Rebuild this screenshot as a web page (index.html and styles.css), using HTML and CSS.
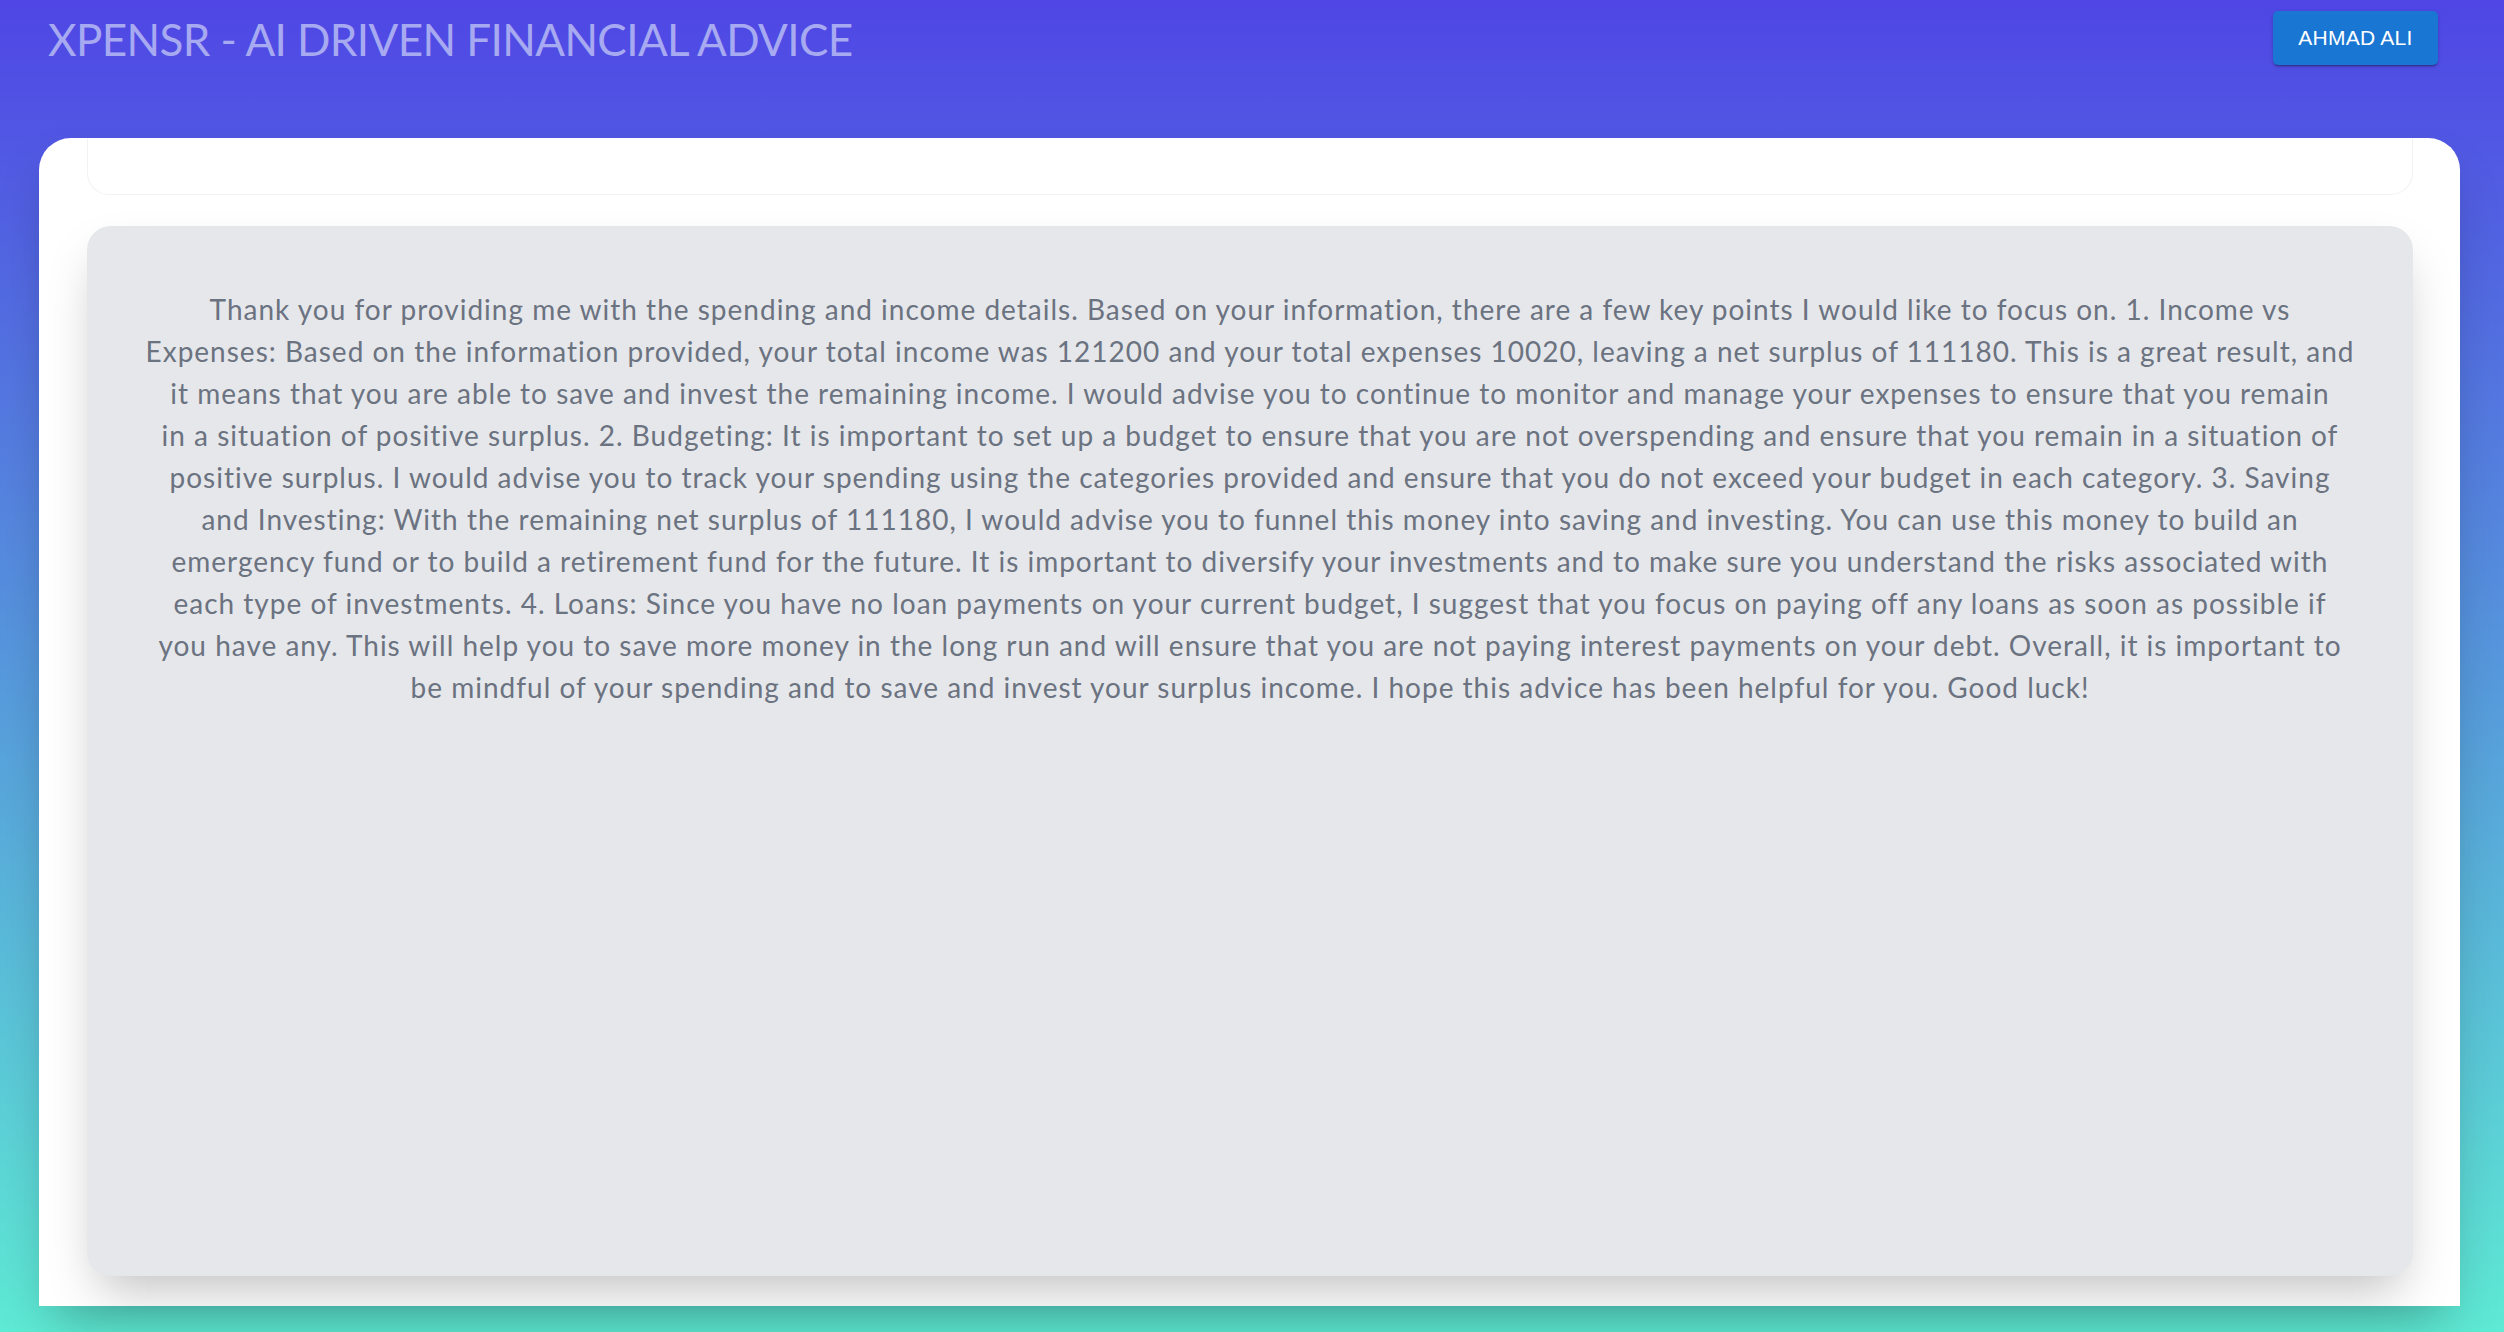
FILE: index.html
```html
<!DOCTYPE html>
<html lang="en">
<head>
<meta charset="utf-8">
<title>XPENSR - AI Driven Financial Advice</title>
<link rel="stylesheet" href="styles.css">
</head>
<body>
<div class="page">
  <header class="topbar">
    <h1 class="title">XPENSR - AI DRIVEN FINANCIAL ADVICE</h1>
    <button class="user-btn" type="button">Ahmad Ali</button>
  </header>
  <main class="card">
    <div class="panel"></div>
    <section class="advice">
      <p class="advice-text">Thank you for providing me with the spending and income details. Based on your information, there are a few key points I would like to focus on. 1. Income vs<br>
Expenses: Based on the information provided, your total income was 121200 and your total expenses 10020, leaving a net surplus of 111180. This is a great result, and<br>
it means that you are able to save and invest the remaining income. I would advise you to continue to monitor and manage your expenses to ensure that you remain<br>
in a situation of positive surplus. 2. Budgeting: It is important to set up a budget to ensure that you are not overspending and ensure that you remain in a situation of<br>
positive surplus. I would advise you to track your spending using the categories provided and ensure that you do not exceed your budget in each category. 3. Saving<br>
and Investing: With the remaining net surplus of 111180, I would advise you to funnel this money into saving and investing. You can use this money to build an<br>
emergency fund or to build a retirement fund for the future. It is important to diversify your investments and to make sure you understand the risks associated with<br>
each type of investments. 4. Loans: Since you have no loan payments on your current budget, I suggest that you focus on paying off any loans as soon as possible if<br>
you have any. This will help you to save more money in the long run and will ensure that you are not paying interest payments on your debt. Overall, it is important to<br>
be mindful of your spending and to save and invest your surplus income. I hope this advice has been helpful for you. Good luck!</p>
    </section>
  </main>
</div>
</body>
</html>
```

FILE: styles.css
```css
html, body {
  margin: 0;
  padding: 0;
}

body {
  height: 1332px;
  overflow: hidden;
  background: linear-gradient(to bottom, #4f46e5 0%, #5eead4 100%);
  font-family: "Lato", "Open Sans", sans-serif;
}

.page {
  height: 1332px;
  display: flex;
  flex-direction: column;
}

.topbar {
  height: 138px;
  box-sizing: border-box;
  padding: 11px 66px 0 48px;
  display: flex;
  justify-content: space-between;
  align-items: flex-start;
}

.title {
  margin: 6px 0 0 0;
  font-family: "Lato", sans-serif;
  font-weight: 400;
  font-size: 44px;
  line-height: 44px;
  letter-spacing: -0.6px;
  color: #a7a9f1;
}

.user-btn {
  width: 165px;
  height: 54px;
  border: 0;
  border-radius: 5px;
  background: #1976d2;
  color: #ffffff;
  font-family: "Liberation Sans", Arial, sans-serif;
  font-size: 21px;
  letter-spacing: 0.25px;
  text-transform: uppercase;
  box-shadow: 0 3px 1px -2px rgba(0,0,0,0.2), 0 2px 2px 0 rgba(0,0,0,0.14), 0 1px 5px 0 rgba(0,0,0,0.12);
  cursor: pointer;
}

.card {
  height: 1168px;
  box-sizing: border-box;
  margin: 0 44px 0 39px;
  padding: 0 47px 30px 48px;
  background: #ffffff;
  border-radius: 32px 32px 0 0;
  box-shadow: 0 25px 50px -12px rgba(0,0,0,0.25);
  display: flex;
  flex-direction: column;
}

.panel {
  height: 57px;
  flex: none;
  box-sizing: border-box;
  border: 1px solid #f1f2f4;
  border-top: 0;
  border-radius: 0 0 22px 22px;
  margin-bottom: 31px;
}

.advice {
  flex: 1;
  background: #e5e7eb;
  border-radius: 24px;
  padding: 62px 10px 64px;
  box-shadow: 0 25px 50px -12px rgba(0,0,0,0.25);
}

.advice-text {
  margin: 0;
  text-align: center;
  white-space: nowrap;
  color: #6b7280;
  font-size: 28px;
  line-height: 42px;
  letter-spacing: 1px;
}
```
